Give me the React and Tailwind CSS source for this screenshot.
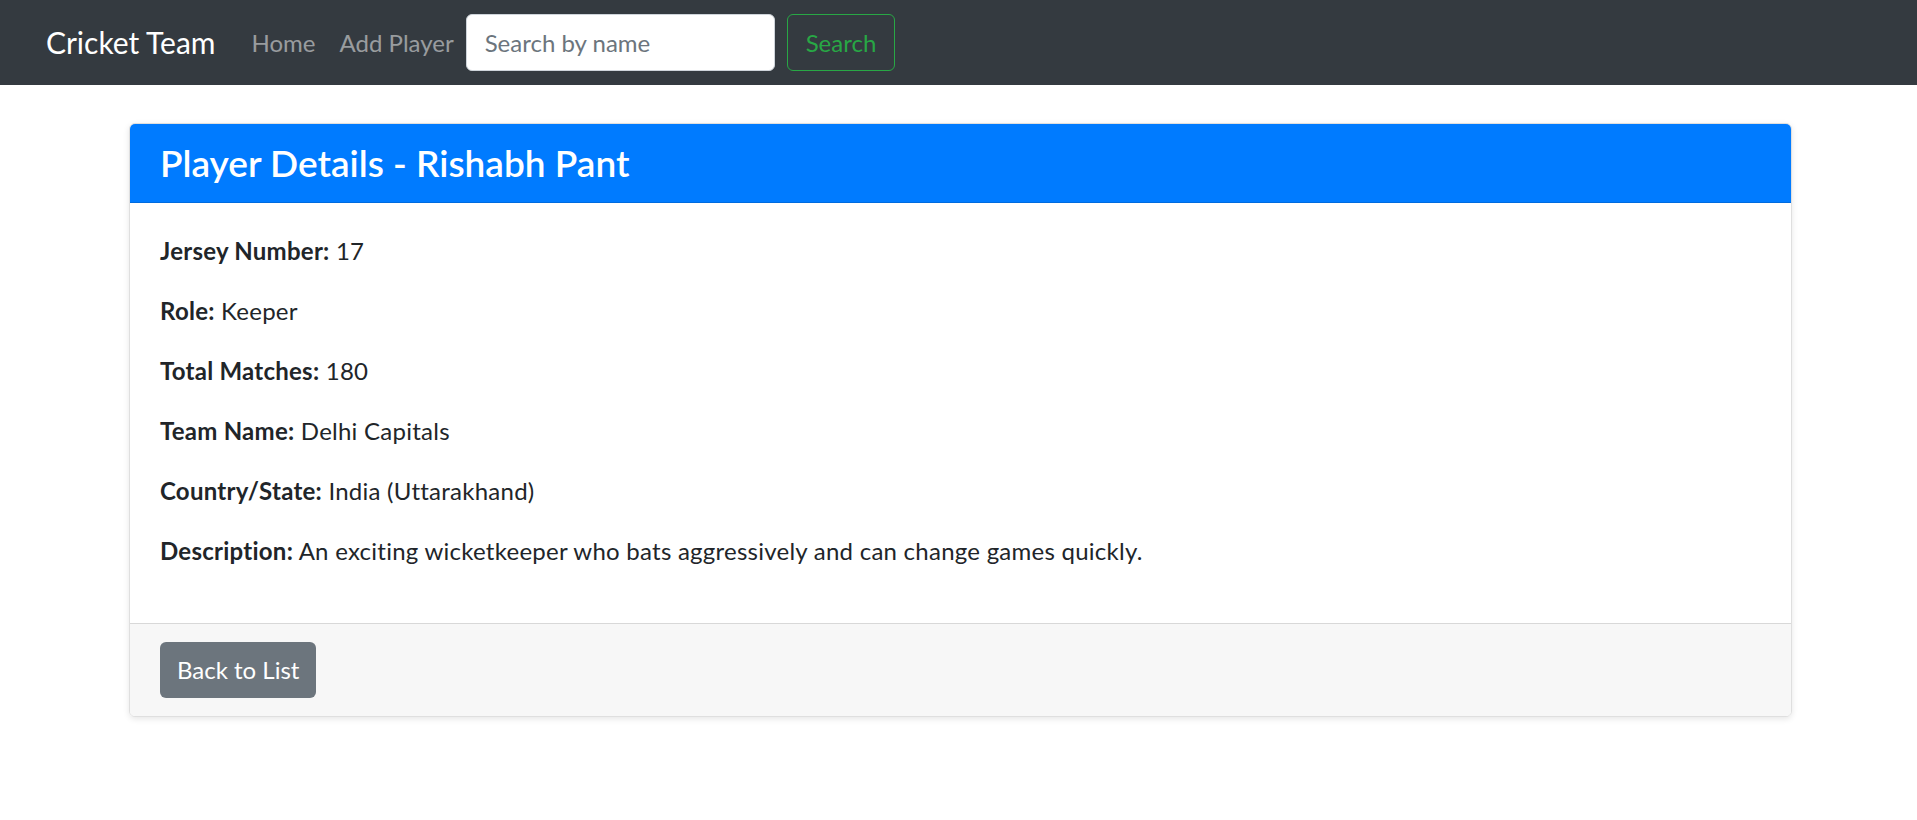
export default function App() {
  const rows = [
    ["Jersey Number:", "17"],
    ["Role:", "Keeper"],
    ["Total Matches:", "180"],
    ["Team Name:", "Delhi Capitals"],
    ["Country/State:", "India (Uttarakhand)"],
    ["Description:", "An exciting wicketkeeper who bats aggressively and can change games quickly."],
  ];
  return (
    <div className="min-h-[820px] bg-white text-[#212529] text-[24px] leading-[1.5]" style={{ fontFamily: "Lato, 'Open Sans', sans-serif" }}>
      <nav className="h-[85px] bg-[#343a40] flex items-center px-[46px]">
        <span className="text-[30px] text-white mr-[24px] leading-[1.5]">Cricket Team</span>
        <span className="px-[12px] text-white/50">Home</span>
        <span className="px-[12px] text-white/50">Add Player</span>
        <div className="w-[309px] h-[57px] bg-white border border-[#ced4da] rounded-[6px] px-[18px] flex items-center text-[#6c757d] mr-[12px]">
          Search by name
        </div>
        <div className="h-[57px] px-[18px] border border-[#28a745] rounded-[6px] text-[#28a745] flex items-center">
          Search
        </div>
      </nav>
      <div className="w-[1663px] ml-[129px] mt-[38px] border border-black/[0.125] rounded-[6px] shadow-[0_2px_6px_rgba(0,0,0,0.1)] overflow-hidden">
        <div className="bg-[#007bff] text-white px-[30px] h-[79px] flex items-center border-b border-black/[0.125]">
          <h4 className="text-[37px] leading-[1.2] font-semibold">Player Details - Rishabh Pant</h4>
        </div>
        <div className="p-[30px] tracking-[0.25px]">
          {rows.map(([k, v]) => (
            <p key={k} className="mb-[24px]">
              <strong className="font-bold">{k}</strong> {v}
            </p>
          ))}
        </div>
        <div className="bg-[#f7f7f7] border-t border-black/[0.125] px-[30px] py-[18px]">
          <div className="inline-flex items-center h-[56px] px-[17px] bg-[#6c757d] text-white rounded-[6px]">Back to List</div>
        </div>
      </div>
    </div>
  );
}
